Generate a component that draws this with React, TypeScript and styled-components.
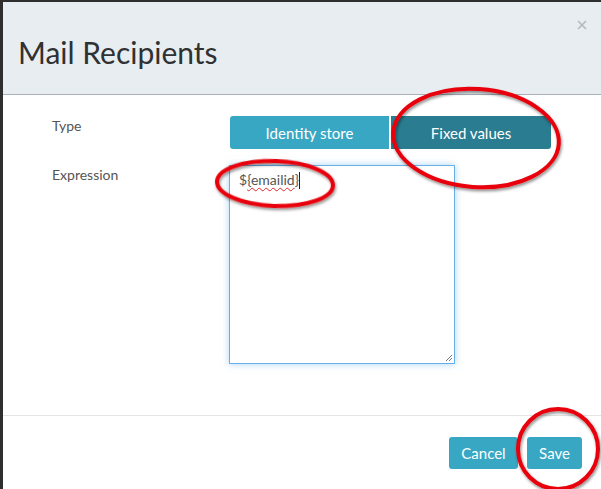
import React from "react";
import styled, { createGlobalStyle } from "styled-components";

const Global = createGlobalStyle`
  html, body { margin: 0; padding: 0; background: #2e2e2e; }
  body { font-family: Lato, "Open Sans", sans-serif; overflow: hidden; }
  * { box-sizing: border-box; }
`;

const Page = styled.div`
  position: relative;
  width: 601px;
  height: 489px;
  padding: 2px 0 0 3px;
  background: #2e2e2e;
  overflow: hidden;
`;

const Modal = styled.div`
  width: 598px;
  height: 520px;
  background: #ffffff;
  display: flex;
  flex-direction: column;
`;

const Header = styled.div`
  position: relative;
  height: 93px;
  padding: 35px 0 0 15px;
  background: #e8edf1;
  border-bottom: 1px solid #a9b0b7;
`;

const Title = styled.h2`
  margin: 0;
  font-family: Lato, sans-serif;
  font-weight: 400;
  font-size: 30px;
  line-height: 30px;
  color: #2f3133;
`;

const Close = styled.button`
  position: absolute;
  top: 17px;
  right: 13px;
  width: 12px;
  height: 12px;
  padding: 0;
  border: 0;
  background: transparent;
  display: flex;
  align-items: center;
  justify-content: center;
`;

const Body = styled.div`
  padding: 21px 0 51px 49px;
  display: flex;
  flex-direction: column;
  gap: 16px;
  border-bottom: 1px solid #e5e5e5;
`;

const Row = styled.div<{ $shift?: number }>`
  display: grid;
  grid-template-columns: ${(p) => 177 + (p.$shift ?? 0)}px 1fr;
  align-items: start;
`;

const Label = styled.div`
  font-size: 14px;
  line-height: 20px;
  color: #555555;
`;

const Segmented = styled.div`
  display: flex;
  gap: 2px;
`;

const SegButton = styled.button<{ $active?: boolean; $first?: boolean }>`
  width: ${(p) => (p.$active ? 160 : 159)}px;
  height: 33px;
  padding: 0;
  border: 0;
  font-family: Lato, sans-serif;
  font-size: 15px;
  color: #ffffff;
  background: ${(p) => (p.$active ? "#2a7c90" : "#38a7c4")};
  border-radius: ${(p) => (p.$first ? "3px 0 0 3px" : "0 3px 3px 0")};
`;

const TextBox = styled.div`
  position: relative;
  width: 226px;
  height: 199px;
  padding: 4px 9px;
  border: 1px solid #66afe9;
  box-shadow: 0 0 7px rgba(102, 175, 233, 0.55);
  font-size: 14px;
  line-height: 20px;
  color: #555555;
`;

const Misspelled = styled.span`
  text-decoration: underline wavy #e0262b;
  text-decoration-thickness: 1px;
  text-underline-offset: 2px;
`;

const Caret = styled.span`
  display: inline-block;
  width: 0;
  height: 17px;
  border-left: 1px solid #222;
  vertical-align: -4px;
`;

const Grip = styled.svg`
  position: absolute;
  right: 1px;
  bottom: 1px;
`;

const Footer = styled.div`
  padding: 21px 19px 0 0;
  display: flex;
  justify-content: flex-end;
  gap: 9px;
`;

const ActionButton = styled.button<{ $w: number }>`
  width: ${(p) => p.$w}px;
  height: 32px;
  padding: 0;
  border: 0;
  border-radius: 3px;
  background: #38a7c4;
  color: #ffffff;
  font-family: Lato, sans-serif;
  font-size: 15px;
`;

const Annotations = styled.svg`
  position: absolute;
  left: 0;
  top: 0;
  pointer-events: none;
  overflow: visible;
`;

export default function App() {
  return (
    <>
      <Global />
      <Page>
        <Modal>
          <Header>
            <Title>Mail Recipients</Title>
            <Close aria-label="close">
              <svg width="10" height="10" viewBox="0 0 10 10">
                <path d="M1 1L9 9M9 1L1 9" stroke="#b4b9be" strokeWidth="1.6" />
              </svg>
            </Close>
          </Header>
          <Body>
            <Row $shift={1}>
              <Label>Type</Label>
              <Segmented>
                <SegButton $first>Identity store</SegButton>
                <SegButton $active>Fixed values</SegButton>
              </Segmented>
            </Row>
            <Row>
              <Label>Expression</Label>
              <TextBox>
                ${<Misspelled>{"{emailid"}</Misspelled>}
                {"}"}
                <Caret />
                <Grip width="9" height="9" viewBox="0 0 9 9">
                  <path d="M8 2L2 8M8 5L5 8" stroke="#777" strokeWidth="1" />
                </Grip>
              </TextBox>
            </Row>
          </Body>
          <Footer>
            <ActionButton $w={69}>Cancel</ActionButton>
            <ActionButton $w={55}>Save</ActionButton>
          </Footer>
        </Modal>
        <Annotations width="601" height="489" viewBox="0 0 601 489">
          <defs>
            <filter id="sh" x="-20%" y="-20%" width="140%" height="140%">
              <feDropShadow dx="1" dy="2" stdDeviation="1.5" floodColor="#000" floodOpacity="0.45" />
            </filter>
          </defs>
          <g fill="none" stroke="#e8000a" strokeWidth="4" filter="url(#sh)">
            <ellipse cx="476" cy="138" rx="83" ry="49" transform="rotate(4 476 138)" />
            <ellipse cx="275" cy="183.5" rx="58" ry="22.5" transform="rotate(2 275 183.5)" />
            <ellipse cx="558" cy="449" rx="40" ry="40" />
          </g>
        </Annotations>
      </Page>
    </>
  );
}
